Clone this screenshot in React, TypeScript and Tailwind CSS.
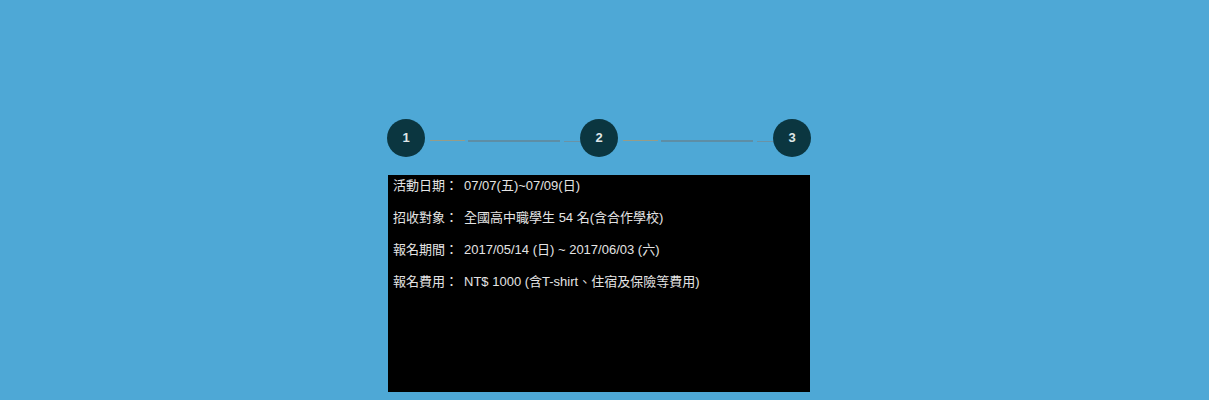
import React from 'react';

const steps = ['1', '2', '3'];

const info = [
  { label: '活動日期：', value: '07/07(五)~07/09(日)' },
  { label: '招收對象：', value: '全國高中職學生 54 名(含合作學校)' },
  { label: '報名期間：', value: '2017/05/14 (日) ~ 2017/06/03 (六)' },
  { label: '報名費用：', value: 'NT$ 1000 (含T-shirt、住宿及保險等費用)' },
];

function Connector() {
  return (
    <div className="flex-1 flex items-start pl-[5px] pt-[21px]">
      <div className="h-px w-[35px] bg-[#969d88]" />
      <div className="h-[2px] flex-1 ml-[3px] bg-[#5d8ea6]" />
      <div className="h-px w-[16px] ml-[4px] mt-px bg-[#6a93a6]" />
    </div>
  );
}

export default function App() {
  return (
    <div
      className="min-h-[400px] w-full bg-[#4ea8d6] pt-[119px]"
      style={{ fontFamily: '"Liberation Sans", "Noto Sans CJK TC", sans-serif' }}
    >
      <div className="ml-[387px] w-[424px]">
        <div className="flex items-start">
          {steps.map((s, i) => (
            <React.Fragment key={s}>
              <div className="w-[38px] h-[38px] shrink-0 rounded-full bg-[#0b3640] flex items-center justify-center text-[13px] font-bold text-[#dfe6e8]">
                {s}
              </div>
              {i < steps.length - 1 && <Connector />}
            </React.Fragment>
          ))}
        </div>

        <div className="mt-[18px] ml-px w-[422px] h-[217px] bg-black pl-[5px] pt-px text-[13px] leading-[20px] text-[#e4e4e4]">
          {info.map((row) => (
            <p key={row.label} className="mb-[12px]">
              <span className="mr-[6px]">{row.label}</span>
              {row.value}
            </p>
          ))}
        </div>
      </div>
    </div>
  );
}
